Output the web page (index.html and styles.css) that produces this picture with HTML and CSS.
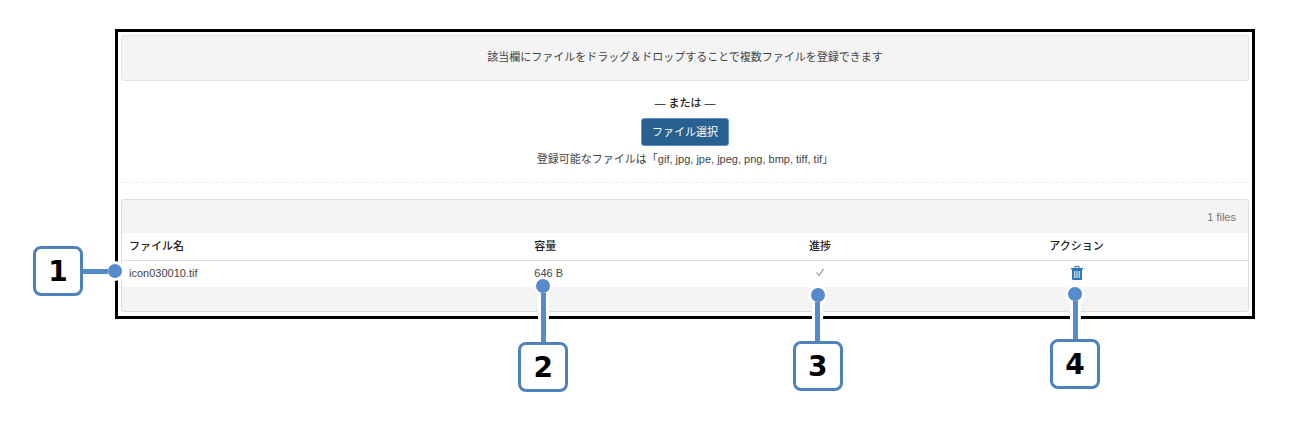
FILE: index.html
```
<!DOCTYPE html>
<html lang="ja">
<head>
    <meta charset="UTF-8">
    <meta name="viewport" content="width=device-width, initial-scale=1.0">
    <title>ファイル登録</title>
    <link rel="stylesheet" href="styles.css">
</head>
<body>
    <div class="frame">
        <div class="drop-zone">該当欄にファイルをドラッグ＆ドロップすることで複数ファイルを登録できます</div>

        <div class="picker">
            <p class="or">― または ―</p>
            <button type="button" class="btn">ファイル選択</button>
            <p class="hint">登録可能なファイルは「gif, jpg, jpe, jpeg, png, bmp, tiff, tif」</p>
        </div>

        <div class="panel">
            <div class="panel-heading">1 files</div>
            <table class="files">
                <thead>
                    <tr>
                        <th class="col-name">ファイル名</th>
                        <th class="col-size">容量</th>
                        <th class="col-progress">進捗</th>
                        <th class="col-action">アクション</th>
                    </tr>
                </thead>
                <tbody>
                    <tr>
                        <td>icon030010.tif</td>
                        <td>646 B</td>
                        <td class="col-progress">
                            <svg class="check" viewBox="0 0 10 9" role="img" aria-label="完了">
                                <path d="M1.5 4.5 L4 7.5 L8.5 1" fill="none" stroke="#5f7a68" stroke-width="1"/>
                            </svg>
                        </td>
                        <td class="col-action">
                            <button type="button" class="delete" aria-label="削除">
                                <svg class="trash" viewBox="0 0 12 14">
                                    <path d="M0 2h3.5V1q0-1 1-1h3q1 0 1 1v1H12v1.5H0zM4.5 1v1h3V1z" fill="#2a78b8" fill-rule="evenodd"/>
                                    <path d="M1 3h10v10q0 1-1 1H2q-1 0-1-1z" fill="#2a78b8"/>
                                    <path d="M3.5 5v7M5.2 5v7M6.9 5v7M8.6 5v7" stroke="#dce9f4" stroke-width="0.9"/>
                                </svg>
                            </button>
                        </td>
                    </tr>
                </tbody>
            </table>
            <div class="panel-footer"></div>
        </div>

        <!-- 番号の吹き出し -->
        <div class="callout callout-side">
            <span class="number">1</span><span class="line"></span><span class="dot"></span>
        </div>
        <div class="callout callout-size">
            <span class="dot"></span><span class="line"></span><span class="number">2</span>
        </div>
        <div class="callout callout-progress">
            <span class="dot"></span><span class="line"></span><span class="number">3</span>
        </div>
        <div class="callout callout-action">
            <span class="dot"></span><span class="line"></span><span class="number">4</span>
        </div>
    </div>
</body>
</html>
```
FILE: styles.css
```
* {
    box-sizing: border-box;
}
body {
    margin: 0;
    padding: 29px 45px 104px 115px;
    background-color: #fff;
    color: #444;
    font-family: "Liberation Sans", Arial, "Noto Sans CJK JP", sans-serif;
    font-size: 11px;
    line-height: 16px;
}
p {
    margin: 0;
}
.frame {
    position: relative;
    padding: 3px 3px 4px;
    border: 3px solid #000;
}
.drop-zone {
    padding: 13px 14px 15px;
    border: 1px solid #e3e3e3;
    border-radius: 3px;
    background-color: #f4f4f4;
    text-align: center;
}
.picker {
    display: flex;
    flex-direction: column;
    align-items: center;
    padding: 14px 0 15px;
    border-bottom: 1px dashed #ececec;
}
.or {
    color: #222;
    font-weight: 500;
}
.btn {
    margin: 7px 0 5px;
    padding: 5px 10px;
    border: 1px solid #5b93d6;
    border-radius: 3px;
    background-color: #286090;
    color: #fff;
    font: inherit;
    cursor: pointer;
}
.panel {
    margin-top: 16px;
    border: 1px solid #ddd;
    border-radius: 3px;
    background-color: #f4f4f4;
}
.panel-heading {
    padding: 9px 12px 8px;
    color: #777;
    text-align: right;
}
.files {
    width: 100%;
    border-collapse: collapse;
    table-layout: fixed;
    background-color: #fff;
}
.files th,
.files td {
    height: 27px;
    padding: 0 7px;
    text-align: left;
    vertical-align: middle;
}
.files td {
    padding-bottom: 2px;
}
.files th {
    border-bottom: 1px solid #ddd;
    color: #222;
    font-weight: 500;
}
.col-name {
    width: 36%;
}
.col-size {
    width: 18%;
}
.col-progress {
    width: 16%;
}
.col-action {
    width: 30%;
}
.files .col-progress,
.files .col-action {
    text-align: center;
}
.files .col-action {
    padding-right: 12px;
}
.check {
    display: block;
    width: 10px;
    height: 9px;
    margin: 0 auto;
}
.delete {
    display: block;
    margin: 0 auto;
    padding: 0;
    border: 0;
    background: none;
    cursor: pointer;
}
.trash {
    display: block;
    width: 12px;
    height: 14px;
}
.panel-footer {
    height: 24px;
}

/* callouts */
.callout {
    position: absolute;
    display: flex;
    flex-direction: column;
    align-items: center;
    width: 50px;
    margin-left: -25px;
}
.callout .dot {
    width: 14px;
    height: 14px;
    border-radius: 50%;
    background-color: #558acb;
    box-shadow: 0 0 0 3px #fff;
}
.callout .line {
    position: relative;
    width: 5px;
    height: 49px;
    background-color: #558acb;
    box-shadow: -3px 0 0 #fff, 3px 0 0 #fff;
}
.callout .number {
    width: 50px;
    height: 50px;
    border: 3px solid #4f81bd;
    border-radius: 8px;
    background-color: #fff;
    color: #000;
    font-family: "DejaVu Sans", sans-serif;
    font-size: 28px;
    font-weight: bold;
    line-height: 46px;
    text-align: center;
}
.callout-side {
    flex-direction: row;
    bottom: 20px;
    left: -85px;
    width: auto;
    margin-left: 0;
}
.callout-side .line {
    width: 25px;
    height: 5px;
    box-shadow: 0 -3px 0 #fff, 0 3px 0 #fff;
}
.callout-size {
    bottom: -76px;
    left: 37.5%;
}
.callout-size .dot {
    box-shadow: 0 0 0 2px #fff;
}
.callout-progress {
    bottom: -75px;
    left: 61.7%;
}
.callout-progress .line {
    height: 39px;
}
.callout-action {
    bottom: -73px;
    left: 84.4%;
}
.callout-action .line {
    height: 38px;
}
```
